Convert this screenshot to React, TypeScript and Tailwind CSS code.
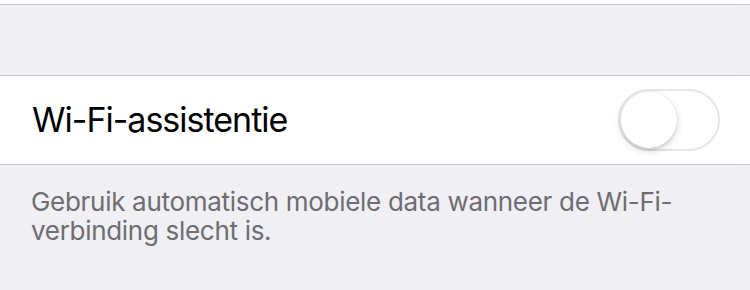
import { useState } from "react";

function Toggle() {
  const [on, setOn] = useState(false);

  return (
    <button
      type="button"
      onClick={() => setOn(!on)}
      className={
        on
          ? "relative w-[102px] h-[62px] rounded-full bg-[#4cd964] border-2 border-[#4cd964]"
          : "relative w-[102px] h-[62px] rounded-full bg-white border-2 border-[#e5e5ea]"
      }
    >
      <span
        className={
          on
            ? "absolute top-px right-px w-[56px] h-[56px] rounded-full bg-white shadow-[0_3px_8px_rgba(0,0,0,0.15),0_3px_1px_rgba(0,0,0,0.06),0_0_0_1px_rgba(0,0,0,0.04)]"
            : "absolute top-px left-px w-[56px] h-[56px] rounded-full bg-white shadow-[0_3px_8px_rgba(0,0,0,0.15),0_3px_1px_rgba(0,0,0,0.06),0_0_0_1px_rgba(0,0,0,0.04)]"
        }
      />
    </button>
  );
}

export default function App() {
  return (
    <div className="w-[750px] h-[290px] bg-[#efeff4] font-['Inter',sans-serif]">
      <div className="h-[4px] bg-white" />
      <div className="h-px bg-[#c8c7cc]" />
      <div className="h-[70px]" />
      <div className="flex items-center justify-between h-[90px] bg-white border-y border-[#c8c7cc] pl-[32px] pr-[30px]">
        <span className="text-[34px] leading-[41px] text-black tracking-[-1px] -mt-[1px]">
          Wi-Fi-assistentie
        </span>
        <Toggle />
      </div>
      <p className="pt-[22px] pl-[31px] pr-[30px] text-[26px] leading-[29px] text-[#6d6d72] tracking-[-0.3px]">
        Gebruik automatisch mobiele data wanneer de Wi-Fi-
        <br />
        verbinding slecht is.
      </p>
    </div>
  );
}
